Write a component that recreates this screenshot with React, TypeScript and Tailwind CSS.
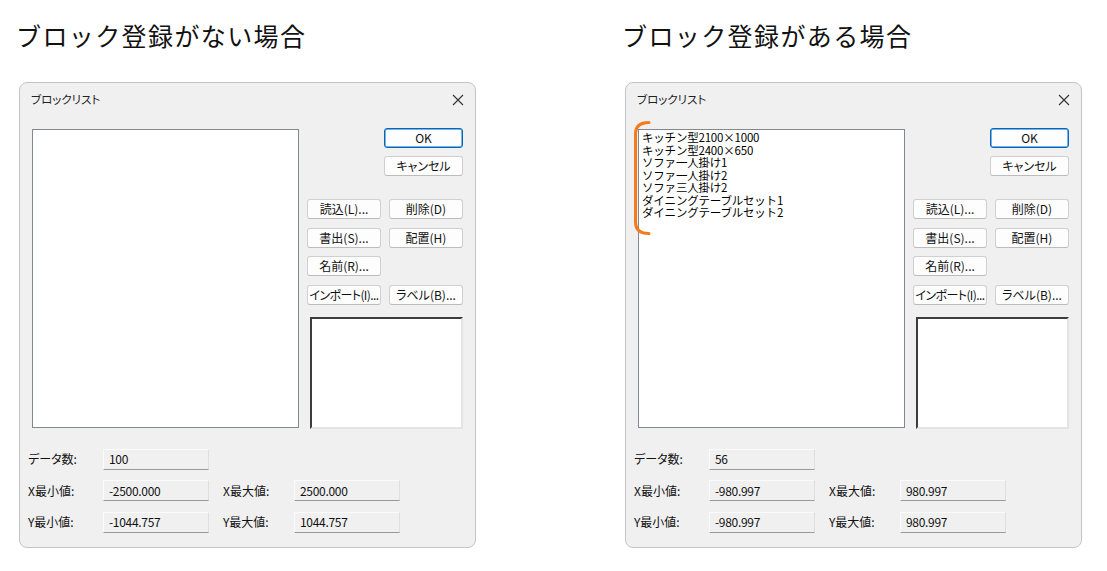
const ui = "font-['Noto_Sans_CJK_JP',sans-serif] [font-feature-settings:'palt'] text-[12px] text-[#111]";

type Info = { count: string; xmin: string; xmax: string; ymin: string; ymax: string };

function Btn({ label, primary, className = "" }: { label: string; primary?: boolean; className?: string }) {
  return (
    <div
      className={`flex h-[20px] items-center justify-center rounded-[3px] bg-[#fdfdfd] leading-none ${
        primary ? "border border-[#0067c0] shadow-[inset_0_0_0_0.5px_#0067c0]" : "border border-[#d0d0d0] border-b-[#bcbcbc]"
      } ${className}`}
    >
      {label}
    </div>
  );
}

function Field({ value }: { value: string }) {
  return (
    <div className="flex h-[21px] w-[106px] items-center border border-t-[#fbfbfb] border-l-[#fbfbfb] border-r-[#dedede] border-b-[#9a9a9a] bg-[#f0f0f0] pl-[5px] tracking-[-0.3px]">
      {value}
    </div>
  );
}

function Dialog({ items, info }: { items: string[]; info: Info }) {
  return (
    <div className={`relative flex h-[466px] w-[457px] flex-col rounded-[8px] border border-[#c4c4c4] bg-[#f0f0f0] ${ui}`}>
      <div className="flex h-[34px] items-center justify-between pl-[11px] pr-[10px]">
        <span className="text-[11.5px] text-[#222]">ブロックリスト</span>
        <svg width="12" height="12" viewBox="0 0 12 12" className="mr-[1px]">
          <path d="M1 1 L11 11 M11 1 L1 11" stroke="#333" strokeWidth="1.1" fill="none" />
        </svg>
      </div>

      <div className="flex gap-[8px] pl-[12px] pr-[12px] pt-[11px]">
        <div className="mt-[1px] h-[299px] w-[267px] border border-[#828790] bg-white pl-[3px] pt-[1px] font-['Noto_Sans_CJK_JP',sans-serif] [font-feature-settings:normal] text-[11.5px] leading-[12.5px] text-black">
          {items.map((it) => (
            <div key={it} className="h-[12.5px] whitespace-nowrap tracking-[-0.2px]">
              {it}
            </div>
          ))}
        </div>

        <div className="flex w-[156px] flex-col">
          <Btn label="OK" primary className="w-[79px] self-end" />
          <Btn label="キャンセル" className="mt-[8px] w-[79px] self-end" />
          <div className="mt-[23px] grid grid-cols-2 gap-x-[8px] gap-y-[8.5px]">
            <Btn label="読込(L)..." />
            <Btn label="削除(D)" />
            <Btn label="書出(S)..." />
            <Btn label="配置(H)" />
            <Btn label="名前(R)..." />
            <div />
            <Btn label="インポート(I)..." className="tracking-[-0.6px]" />
            <Btn label="ラベル(B)..." />
          </div>
          <div className="mt-[12px] h-[112px] w-[153px] self-end border-2 border-t-[#3c3c3c] border-l-[#3c3c3c] border-r-[#e4e4e4] border-b-[#e4e4e4] bg-white" />
        </div>
      </div>

      <div className="mt-[20px] flex flex-col gap-[10.5px] pl-[8px]">
        <div className="flex items-center">
          <span className="w-[75px]">データ数:</span>
          <Field value={info.count} />
        </div>
        <div className="flex items-center">
          <span className="w-[75px]">X最小値:</span>
          <Field value={info.xmin} />
          <span className="ml-[14px] w-[71px]">X最大値:</span>
          <Field value={info.xmax} />
        </div>
        <div className="flex items-center">
          <span className="w-[75px]">Y最小値:</span>
          <Field value={info.ymin} />
          <span className="ml-[14px] w-[71px]">Y最大値:</span>
          <Field value={info.ymax} />
        </div>
      </div>

      {items.length > 0 && (
        <svg width="22" height="118" viewBox="0 0 22 118" className="absolute left-[5px] top-[37px]">
          <path
            d="M18 2.5 C9 2.5 4.5 6 4.5 14 L4.5 102 C4.5 110 9 113.5 18 113.5"
            stroke="#f47a1f"
            strokeWidth="3"
            strokeLinecap="round"
            fill="none"
          />
        </svg>
      )}
    </div>
  );
}

const blocks = [
  "キッチン型2100×1000",
  "キッチン型2400×650",
  "ソファ一人掛け1",
  "ソファ一人掛け2",
  "ソファ三人掛け2",
  "ダイニングテーブルセット1",
  "ダイニングテーブルセット2",
];

export default function App() {
  return (
    <div className="h-[571px] w-[1107px] bg-white">
      <div className="flex gap-[149px] pl-[19px] pt-[17px]">
        <div className="flex flex-col">
          <h2 className="ml-[-3px] h-[36px] font-['Noto_Sans_CJK_JP',sans-serif] text-[25px] leading-[36px] tracking-[1.4px] text-[#111]">
            ブロック登録がない場合
          </h2>
          <div className="mt-[29px]">
            <Dialog
              items={[]}
              info={{ count: "100", xmin: "-2500.000", xmax: "2500.000", ymin: "-1044.757", ymax: "1044.757" }}
            />
          </div>
        </div>
        <div className="flex flex-col">
          <h2 className="ml-[-3px] h-[36px] font-['Noto_Sans_CJK_JP',sans-serif] text-[25px] leading-[36px] tracking-[1.4px] text-[#111]">
            ブロック登録がある場合
          </h2>
          <div className="mt-[29px]">
            <Dialog
              items={blocks}
              info={{ count: "56", xmin: "-980.997", xmax: "980.997", ymin: "-980.997", ymax: "980.997" }}
            />
          </div>
        </div>
      </div>
    </div>
  );
}
